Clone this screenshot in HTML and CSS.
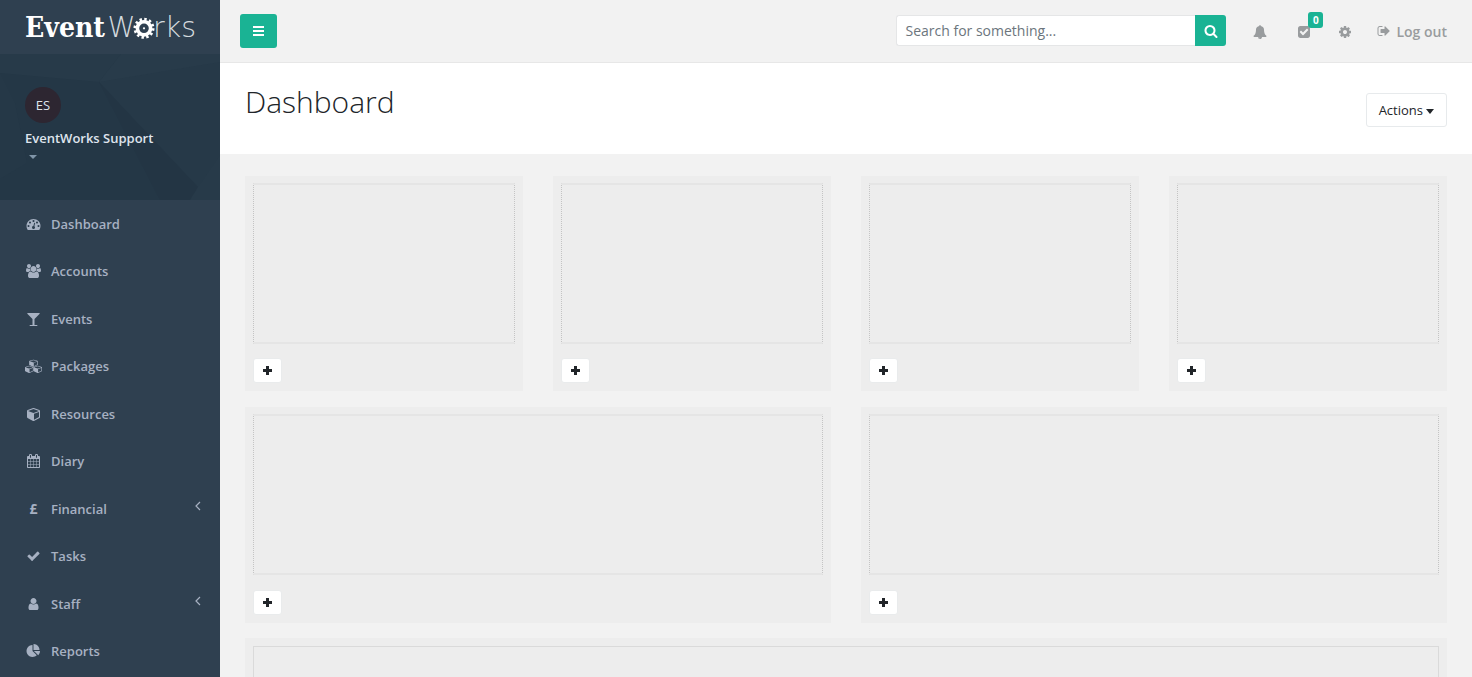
FILE: index.html
```
<!DOCTYPE html>
<html lang="en">
<head>
  <meta charset="UTF-8" />
  <meta name="viewport" content="width=device-width, initial-scale=1.0" />
  <title>EventWorks | Dashboard</title>
  <link rel="stylesheet" href="styles.css">
</head>
<body>
  <nav class="sidebar">
    <div class="logo">
      <svg width="176" height="30" viewBox="0 0 176 30">
        <text class="logo-bold" x="0" y="25.5" textLength="80" lengthAdjust="spacingAndGlyphs">Event</text>
        <text class="logo-thin" x="82.5" y="25.5" textLength="28" lengthAdjust="spacingAndGlyphs">W</text>
        <text class="logo-thin" x="128" y="25.5" textLength="43" lengthAdjust="spacingAndGlyphs">rks</text>
        <circle class="gear-teeth" cx="119" cy="17.3" r="9" />
        <circle class="gear-ring" cx="119" cy="17.3" r="6.6" />
        <circle class="gear-dot" cx="119" cy="17.3" r="1.1" />
      </svg>
    </div>
    <div class="profile">
      <svg class="profile-bg" width="220" height="146" viewBox="0 0 220 146" preserveAspectRatio="none">
        <path fill="#273a49" d="M0 0h121L99 28 0 19z" />
        <path fill="#283b4a" d="M121 0h99v40L99 28z" />
        <path fill="#263948" d="M99 28l121-20v125l-22 3z" />
        <path fill="#233544" d="M99 28l99 105-8 13h-30z" />
        <path fill="#273a49" d="M198 133l22-32v45h-30z" />
        <path fill="#253847" d="M0 19l15 30 12 60L0 125z" />
      </svg>
      <div class="avatar">ES</div>
      <strong class="name">EventWorks Support</strong>
      <span class="caret"></span>
    </div>
    <ul class="menu">
      <li><svg class="icon" viewBox="0 0 1792 1792"><path d="M384 1152q0-53-37.5-90.5t-90.5-37.5-90.5 37.5-37.5 90.5 37.5 90.5 90.5 37.5 90.5-37.5 37.5-90.5zm192-448q0-53-37.5-90.5t-90.5-37.5-90.5 37.5-37.5 90.5 37.5 90.5 90.5 37.5 90.5-37.5 37.5-90.5zm428 481l101-382q6-26-7.5-48.5t-38.5-29.5-48 6.5-30 39.5l-101 382q-60 5-107 43.5t-63 98.5q-20 77 20 146t117 89 146-20 89-117q16-60-6-117t-72-91zm660-33q0-53-37.5-90.5t-90.5-37.5-90.5 37.5-37.5 90.5 37.5 90.5 90.5 37.5 90.5-37.5 37.5-90.5zm-640-640q0-53-37.5-90.5t-90.5-37.5-90.5 37.5-37.5 90.5 37.5 90.5 90.5 37.5 90.5-37.5 37.5-90.5zm448 192q0-53-37.5-90.5t-90.5-37.5-90.5 37.5-37.5 90.5 37.5 90.5 90.5 37.5 90.5-37.5 37.5-90.5zm320 448q0 261-141 483-19 29-54 29h-1402q-35 0-54-29-141-221-141-483 0-182 71-348t191-286 286-191 348-71 348 71 286 191 191 286 71 348z"/></svg>Dashboard</li>
      <li><svg class="icon" viewBox="0 0 1920 1792"><path d="M593 896q-162 5-265 128h-134q-82 0-138-40.5t-56-118.5q0-353 124-353 6 0 43.5 21t97.5 42.5 119 21.5q67 0 133-23-5 37-5 66 0 139 81 256zm1071 637q0 120-73 189.5t-194 69.5h-874q-121 0-194-69.5t-73-189.5q0-53 3.5-103.5t14-109 26.5-108.5 43-97.5 62-81 85.5-53.5 111.5-20q10 0 43 21.5t73 48 107 48 135 21.5 135-21.5 107-48 73-48 43-21.5q61 0 111.5 20t85.5 53.5 62 81 43 97.5 26.5 108.5 14 109 3.5 103.5zm-1024-1277q0 106-75 181t-181 75-181-75-75-181 75-181 181-75 181 75 75 181zm704 384q0 159-112.5 271.5t-271.5 112.5-271.5-112.5-112.5-271.5 112.5-271.5 271.5-112.5 271.5 112.5 112.5 271.5zm576 225q0 78-56 118.5t-138 40.5h-134q-103-123-265-128 81-117 81-256 0-29-5-66 66 23 133 23 59 0 119-21.5t97.5-42.5 43.5-21q124 0 124 353zm-128-609q0 106-75 181t-181 75-181-75-75-181 75-181 181-75 181 75 75 181z"/></svg>Accounts</li>
      <li><svg class="icon" viewBox="0 0 1792 1792"><path d="M1699 186q0 35-43 78l-632 632v768h320q26 0 45 19t19 45-19 45-45 19h-896q-26 0-45-19t-19-45 19-45 45-19h320v-768l-632-632q-43-43-43-78 0-23 18-36.5t38-17.5 43-4h1408q23 0 43 4t38 17.5 18 36.5z"/></svg>Events</li>
      <li><svg class="icon" viewBox="0 0 2200 1792">
        <defs><path id="cube" d="M896 1629l640-349v-636l-640 233v752zm-64-865l698-254-698-254-698 254zm832-252v768q0 35-18 65t-49 47l-704 384q-28 16-61 16t-61-16l-704-384q-31-17-49-47t-18-65v-768q0-40 23-73t61-47l704-256q22-8 44-8t44 8l704 256q38 14 61 47t23 73z"/></defs>
        <use href="#cube" transform="translate(540) scale(.67 .56)" />
        <use href="#cube" transform="translate(-10 800) scale(.67 .56)" />
        <use href="#cube" transform="translate(1095 800) scale(.67 .56)" />
      </svg>Packages</li>
      <li><svg class="icon" viewBox="-64 0 1792 1792"><use href="#cube" /></svg>Resources</li>
      <li><svg class="icon" viewBox="0 0 1792 1792"><path d="M192 1664h288v-288h-288v288zm352 0h320v-288h-320v288zm-352-352h288v-320h-288v320zm352 0h320v-320h-320v320zm-352-384h288v-288h-288v288zm736 736h320v-288h-320v288zm-384-736h320v-288h-320v288zm768 736h288v-288h-288v288zm-384-352h320v-320h-320v320zm-352-864v-288q0-13-9.5-22.5t-22.5-9.5h-64q-13 0-22.5 9.5t-9.5 22.5v288q0 13 9.5 22.5t22.5 9.5h64q13 0 22.5-9.5t9.5-22.5zm736 864h288v-320h-288v320zm-384-384h320v-288h-320v288zm384 0h288v-288h-288v288zm32-480v-288q0-13-9.5-22.5t-22.5-9.5h-64q-13 0-22.5 9.5t-9.5 22.5v288q0 13 9.5 22.5t22.5 9.5h64q13 0 22.5-9.5t9.5-22.5zm384-64v1280q0 52-38 90t-90 38h-1408q-52 0-90-38t-38-90v-1280q0-52 38-90t90-38h128v-96q0-66 47-113t113-47h64q66 0 113 47t47 113v96h384v-96q0-66 47-113t113-47h64q66 0 113 47t47 113v96h128q52 0 90 38t38 90z"/></svg>Diary</li>
      <li><span class="icon pound">£</span>Financial<svg class="arrow" viewBox="0 0 6 10"><path d="M5 1L1 5l4 4" /></svg></li>
      <li><svg class="icon" viewBox="0 0 1792 1792"><path d="M1671 566q0 40-28 68l-724 724-136 136q-28 28-68 28t-68-28l-136-136-362-362q-28-28-28-68t28-68l136-136q28-28 68-28t68 28l294 295 656-657q28-28 68-28t68 28l136 136q28 28 28 68z"/></svg>Tasks</li>
      <li><svg class="icon" viewBox="0 0 1792 1792"><path d="M1536 1399q0 109-62.5 187t-150.5 78h-854q-88 0-150.5-78t-62.5-187q0-85 8.5-160.5t31.5-152 58.5-131 94-89 134.5-34.5q131 128 313 128t313-128q76 0 134.5 34.5t94 89 58.5 131 31.5 152 8.5 160.5zm-256-887q0 159-112.5 271.5t-271.5 112.5-271.5-112.5-112.5-271.5 112.5-271.5 271.5-112.5 271.5 112.5 112.5 271.5z"/></svg>Staff<svg class="arrow" viewBox="0 0 6 10"><path d="M5 1L1 5l4 4" /></svg></li>
      <li><svg class="icon" viewBox="0 0 1792 1792"><path d="M768 890l546 546q-106 108-247.5 168t-298.5 60q-209 0-385.5-103t-279.5-279.5-103-385.5 103-385.5 279.5-279.5 385.5-103v762zm187 6h773q0 157-60 298.5t-168 247.5zm709-128h-768v-768q209 0 385.5 103t279.5 279.5 103 385.5z"/></svg>Reports</li>
    </ul>
  </nav>

  <div class="main">
    <div class="topbar">
      <button class="toggle"><svg width="11" height="10" viewBox="0 0 11 10"><path d="M0 0h11v2H0zM0 4h11v2H0zM0 8h11v2H0z" /></svg></button>
      <div class="search">
        <input type="text" placeholder="Search for something..." />
        <button><svg width="14" height="14" viewBox="0 0 1792 1792"><path d="M1216 832q0-185-131.5-316.5t-316.5-131.5-316.5 131.5-131.5 316.5 131.5 316.5 316.5 131.5 316.5-131.5 131.5-316.5zm512 832q0 52-38 90t-90 38q-54 0-90-38l-343-342q-179 124-399 124-143 0-273.5-55.5t-225-150-150-225-55.5-273.5 55.5-273.5 150-225 225-150 273.5-55.5 273.5 55.5 225 150 150 225 55.5 273.5q0 220-124 399l343 343q37 37 37 90z"/></svg></button>
      </div>
      <div class="top-links">
        <svg class="bell" viewBox="0 0 1792 1792"><path d="M912 1696q0-16-16-16-59 0-101.5-42.5t-42.5-101.5q0-16-16-16t-16 16q0 73 51.5 124.5t124.5 51.5q16 0 16-16zm816-288q0 52-38 90t-90 38h-448q0 106-75 181t-181 75-181-75-75-181h-448q-52 0-90-38t-38-90q50-42 91-88t85-119.5 74.5-158.5 50-206 19.5-260q0-152 117-282.5t307-158.5q-8-19-8-39 0-40 28-68t68-28 68 28 28 68q0 20-8 39 190 28 307 158.5t117 282.5q0 139 19.5 260t50 206 74.5 158.5 85 119.5 91 88z"/></svg>
        <span class="todo">
          <svg viewBox="0 0 1792 1792"><path d="M813 1299l614-614q19-19 19-45t-19-45l-102-102q-19-19-45-19t-45 19l-467 467-211-211q-19-19-45-19t-45 19l-102 102q-19 19-19 45t19 45l358 358q19 19 45 19t45-19zm851-883v960q0 119-84.5 203.5t-203.5 84.5h-960q-119 0-203.5-84.5t-84.5-203.5v-960q0-119 84.5-203.5t203.5-84.5h960q119 0 203.5 84.5t84.5 203.5z"/></svg>
          <span class="badge">0</span>
        </span>
        <svg class="cog" viewBox="0 0 1792 1792"><path d="M1152 896q0-106-75-181t-181-75-181 75-75 181 75 181 181 75 181-75 75-181zm512-109v222q0 12-8 23t-20 13l-185 28q-19 54-39 91 35 50 107 138 10 12 10 25t-9 23q-27 37-99 108t-94 71q-12 0-26-9l-138-108q-44 23-91 38-16 136-29 186-7 28-36 28h-222q-14 0-24.5-8.5t-11.5-21.5l-28-184q-49-16-90-37l-141 107q-10 9-25 9-14 0-25-11-126-114-165-168-7-10-7-23 0-12 8-23 15-21 51-66.5t54-70.5q-27-50-41-99l-183-27q-13-2-21-12.5t-8-23.5v-222q0-12 8-23t19-13l186-28q14-46 39-92-40-57-107-138-10-12-10-24 0-10 9-23 26-36 98.5-107.5t94.5-71.5q13 0 26 10l138 107q44-23 91-38 16-136 29-186 7-28 36-28h222q14 0 24.5 8.5t11.5 21.5l28 184q49 16 90 37l142-107q9-9 24-9 13 0 25 10 129 119 165 170 7 8 7 22 0 12-8 23-15 21-51 66.5t-54 70.5q26 50 41 98l183 28q13 2 21 12.5t8 23.5z"/></svg>
        <a class="logout"><svg viewBox="0 0 1792 1792"><path d="M704 1440q0 4 1 20t.5 26.5-3 23.5-10 19.5-20.5 6.5h-320q-119 0-203.5-84.5t-84.5-203.5v-704q0-119 84.5-203.5t203.5-84.5h320q13 0 22.5 9.5t9.5 22.5q0 4 1 20t.5 26.5-3 23.5-10 19.5-20.5 6.5h-320q-66 0-113 47t-47 113v704q0 66 47 113t113 47h312l11.5 1 11.5 3 8 5.5 7 9 2 13.5zm928-544q0 26-19 45l-544 544q-19 19-45 19t-45-19-19-45v-288h-448q-26 0-45-19t-19-45v-384q0-26 19-45t45-19h448v-288q0-26 19-45t45-19 45 19l544 544q19 19 19 45z"/></svg>Log out</a>
      </div>
    </div>

    <div class="page-heading">
      <h2>Dashboard</h2>
      <button class="actions">Actions <span class="caret"></span></button>
    </div>

    <div class="widgets">
      <div class="widget"><div class="drop"></div><button class="add"></button></div>
      <div class="widget"><div class="drop"></div><button class="add"></button></div>
      <div class="widget"><div class="drop"></div><button class="add"></button></div>
      <div class="widget"><div class="drop"></div><button class="add"></button></div>
      <div class="widget half"><div class="drop"></div><button class="add"></button></div>
      <div class="widget half"><div class="drop"></div><button class="add"></button></div>
      <div class="widget full"><div class="drop"></div><button class="add"></button></div>
    </div>
  </div>
</body>
</html>
```
FILE: styles.css
```
* {
  box-sizing: border-box;
}
body {
  margin: 0;
  height: 677px;
  overflow: hidden;
  display: flex;
  font-family: "Open Sans", sans-serif;
  font-size: 13px;
  color: #212529;
  background-color: #f2f2f2;
}
button {
  font-family: inherit;
  padding: 0;
  border: none;
}
svg {
  fill: currentColor;
}
.sidebar {
  width: 220px;
  height: 677px;
  overflow: hidden;
  flex: none;
  background-color: #2f4050;
  color: #a7b1c2;
}
.logo {
  height: 54px;
  padding: 11px 0 0 25px;
}
.logo svg {
  display: block;
  overflow: visible;
}
.logo-bold {
  font: bold 28px "DejaVu Serif", serif;
  fill: #fff;
}
.logo-thin {
  font: 200 28px "DejaVu Sans", sans-serif;
  fill: #d5dade;
}
.gear-teeth {
  fill: none;
  stroke: #fff;
  stroke-width: 3px;
  stroke-dasharray: 2.4 2.31;
}
.gear-ring {
  fill: none;
  stroke: #fff;
  stroke-width: 3.6px;
}
.gear-dot {
  fill: #fff;
}
.profile {
  position: relative;
  height: 146px;
  padding: 33px 25px 0;
  background-color: #243746;
}
.profile-bg {
  position: absolute;
  top: 0;
  left: 0;
}
.avatar {
  position: relative;
  width: 36px;
  height: 36px;
  border-radius: 50%;
  background-color: #2d2631;
  color: #dfe4ed;
  line-height: 36px;
  text-align: center;
}
.name {
  position: relative;
  display: block;
  margin-top: 5px;
  line-height: 20px;
  font-weight: 600;
  color: #dfe4ed;
}
.caret {
  display: inline-block;
  border: 4px solid transparent;
  border-top-color: currentColor;
  border-bottom: 0;
}
.profile .caret {
  position: relative;
  display: block;
  width: 8px;
  margin: 7px 0 0 4px;
  color: #8095a8;
}
.menu {
  list-style: none;
  margin: 0;
  padding: 0;
}
.menu li {
  display: flex;
  align-items: center;
  height: 47.5px;
  padding: 0 19px 0 25px;
  font-weight: 600;
}
.icon {
  width: 17px;
  height: 14px;
  flex: none;
  margin-right: 9px;
}
.pound {
  font-size: 14px;
  font-weight: 700;
  line-height: 14px;
  text-align: center;
}
.arrow {
  width: 6px;
  height: 10px;
  margin: -6px 0 0 auto;
  fill: none;
  stroke: currentColor;
  stroke-width: 1.2;
}
.main {
  flex: 1;
  height: 677px;
  overflow: hidden;
}
.topbar {
  display: flex;
  height: 63px;
  padding: 14px 25px 0 20px;
  border-bottom: 1px solid #e7e7e7;
}
.toggle {
  display: flex;
  align-items: center;
  justify-content: center;
  width: 37px;
  height: 34px;
  border-radius: 3px;
  background-color: #1ab394;
  color: #fff;
}
.search {
  display: flex;
  width: 330px;
  height: 31px;
  margin: 1px 27px 0 auto;
}
.search input {
  flex: 1;
  min-width: 0;
  padding: 0 8px;
  border: 1px solid #e5e6e7;
  border-right: none;
  border-radius: 3px 0 0 3px;
  font: 14px "Open Sans", sans-serif;
}
.search input::placeholder {
  color: #6c757d;
}
.search button {
  display: flex;
  align-items: center;
  justify-content: center;
  width: 31px;
  border-radius: 0 3px 3px 0;
  background-color: #1ab394;
  color: #fff;
}
.top-links {
  display: flex;
  align-items: center;
  height: 36px;
  color: #999c9e;
}
.top-links svg {
  display: block;
  width: 14px;
  height: 14px;
}
.todo {
  position: relative;
  margin: 0 27px 0 30px;
}
.badge {
  position: absolute;
  top: -13px;
  left: 11px;
  width: 15px;
  height: 16px;
  border-radius: 3px;
  background-color: #1ab394;
  color: #fff;
  font-size: 10px;
  font-weight: 700;
  line-height: 16px;
  text-align: center;
}
.logout {
  display: flex;
  align-items: center;
  height: 20px;
  margin: -1px 0 1px 25px;
  font-size: 14px;
  font-weight: 600;
}
.logout svg {
  margin-right: 5px;
}
.page-heading {
  display: flex;
  justify-content: space-between;
  height: 91px;
  padding: 20px 25px 0;
  background-color: #fff;
}
.page-heading h2 {
  margin: 0;
  font-size: 30px;
  font-weight: 300;
  line-height: 38px;
}
.actions {
  width: 81px;
  height: 34px;
  margin-top: 10px;
  border: 1px solid #e7eaec;
  border-radius: 3px;
  background-color: #fff;
  color: #212529;
  font-size: 13px;
}
.actions .caret {
  border-width: 5px 4px 0;
  vertical-align: 1px;
}
.widgets {
  display: grid;
  grid-template-columns: repeat(4, 1fr);
  gap: 15px 30px;
  padding: 22px 25px 0;
}
.widget {
  height: 215px;
  margin-bottom: 1px;
  padding: 7px 8px;
  background-color: #ededed;
}
.half {
  grid-column: span 2;
  height: 216px;
  margin-bottom: 0;
}
.full {
  grid-column: span 4;
}
.drop {
  height: 161px;
  border: 1px dotted #c4c4c4;
  border-top: 2px solid #e5e5e5;
  border-bottom: 2px solid #e5e5e5;
}
.full .drop {
  margin-top: 1px;
  border: 1px solid #dadada;
}
.add {
  display: flex;
  align-items: center;
  justify-content: center;
  width: 29px;
  height: 25px;
  margin-top: 14px;
  border: 1px solid #e9ebec;
  border-radius: 3px;
  background-color: #fff;
}
.half .add {
  margin-top: 15px;
}
.add::before {
  content: "";
  width: 9px;
  height: 9px;
  background: linear-gradient(#212529, #212529) center / 9px 3px no-repeat,
    linear-gradient(#212529, #212529) center / 3px 9px no-repeat;
}
```
